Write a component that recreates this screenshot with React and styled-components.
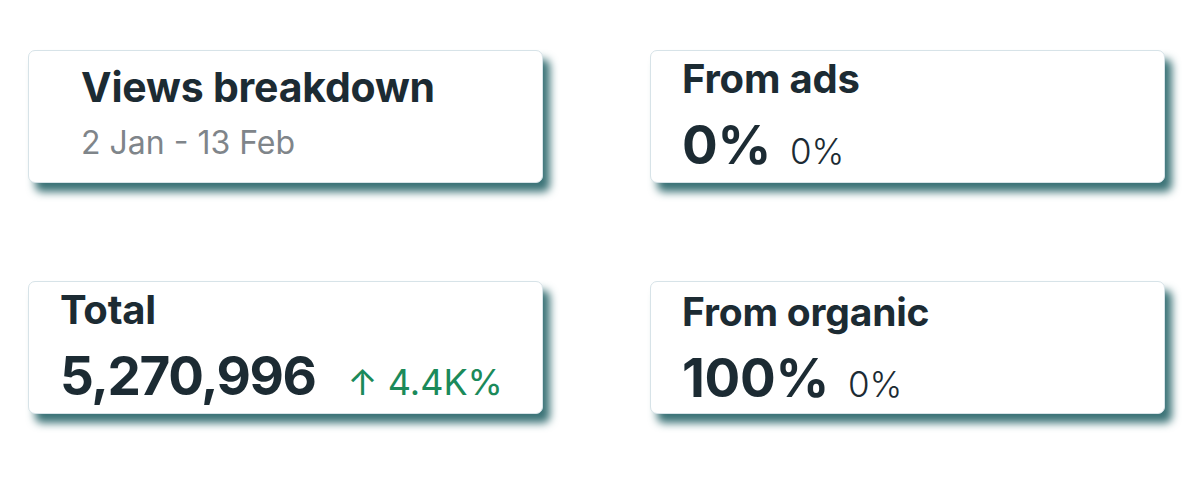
import React from "react";
import styled, { createGlobalStyle } from "styled-components";

const GlobalStyle = createGlobalStyle`
  body {
    margin: 0;
    background: #ffffff;
    font-family: Inter, "Noto Sans", sans-serif;
  }
`;

function Breakdown() {
  return (
    <Page>
      <GlobalStyle />
      <Card $pad={52} $top={13}>
        <Title $size={41}>Views breakdown</Title>
        <Sub>2 Jan - 13 Feb</Sub>
      </Card>

      <Card>
        <Title>From ads</Title>
        <ValueRow>
          <Big>0%</Big>
          <Small>0%</Small>
        </ValueRow>
      </Card>

      <Card>
        <Title>Total</Title>
        <ValueRow>
          <Big $tight>5,270,996</Big>
          <Change>↑ 4.4K%</Change>
        </ValueRow>
      </Card>

      <Card $top={7}>
        <Title $size={39}>From organic</Title>
        <ValueRow>
          <Big>100%</Big>
          <Small>0%</Small>
        </ValueRow>
      </Card>
    </Page>
  );
}

export default Breakdown;

const Page = styled.div`
  display: grid;
  grid-template-columns: 515px 515px;
  grid-auto-rows: 133px;
  column-gap: 107px;
  row-gap: 98px;
  align-content: start;
  padding: 50px 0 0 28px;
  min-height: 480px;
  box-sizing: border-box;
`;

const Card = styled.div`
  box-sizing: border-box;
  padding: ${(p) => (p.$top != null ? p.$top : 5)}px 0 0 ${(p) => p.$pad || 31}px;
  background: #fff;
  border: 1px solid #d7e3e8;
  border-radius: 7px;
  box-shadow: 7px 9px 9px #3b7377;
  display: flex;
  flex-direction: column;
  color: #1c2b33;
`;

const Title = styled.div`
  font-size: ${(p) => p.$size || 40}px;
  font-weight: 700;
  letter-spacing: -0.2px;
  line-height: 46px;
`;

const Sub = styled.div`
  margin-top: 14px;
  font-size: 32px;
  color: #7f858a;
  line-height: 38px;
`;

const ValueRow = styled.div`
  margin-top: 13px;
  display: flex;
  align-items: baseline;
  line-height: 60px;
`;

const Big = styled.span`
  font-size: 53px;
  font-weight: 700;
  letter-spacing: ${(p) => (p.$tight ? "-1.4px" : "-0.3px")};
`;

const Small = styled.span`
  margin-left: 19px;
  font-size: 35px;
  font-weight: 300;
`;

const Change = styled.span`
  margin-left: 32px;
  font-size: 36px;
  font-weight: 400;
  color: #1b8a5a;
`;
